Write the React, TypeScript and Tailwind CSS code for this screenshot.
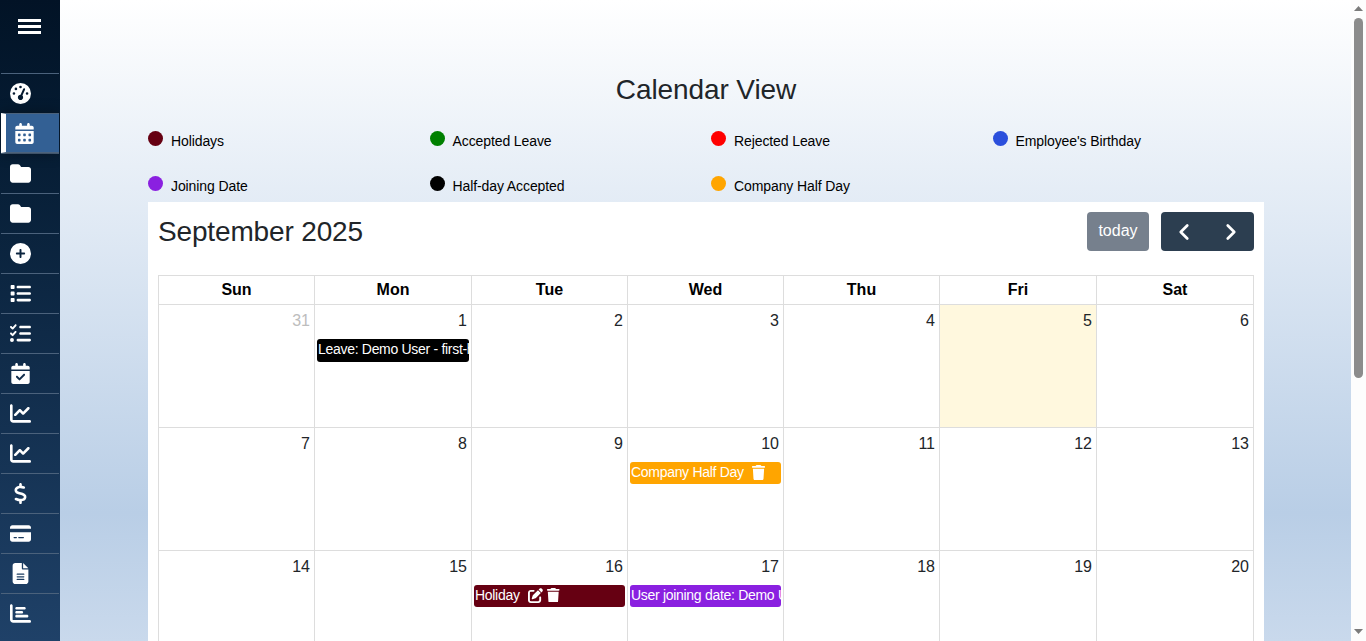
import {
  FaGaugeHigh,
  FaCalendarDays,
  FaFolder,
  FaCirclePlus,
  FaList,
  FaListCheck,
  FaCalendarCheck,
  FaChartLine,
  FaDollarSign,
  FaCreditCard,
  FaFileLines,
  FaChartBar,
  FaPenToSquare,
  FaTrash,
} from 'react-icons/fa6';
import type { IconType } from 'react-icons';
import { ChevronLeft, ChevronRight } from 'lucide-react';

const navItems: { icon: IconType; active?: boolean }[] = [
  { icon: FaGaugeHigh },
  { icon: FaCalendarDays, active: true },
  { icon: FaFolder },
  { icon: FaFolder },
  { icon: FaCirclePlus },
  { icon: FaList },
  { icon: FaListCheck },
  { icon: FaCalendarCheck },
  { icon: FaChartLine },
  { icon: FaChartLine },
  { icon: FaDollarSign },
  { icon: FaCreditCard },
  { icon: FaFileLines },
  { icon: FaChartBar },
];

const legend = [
  { label: 'Holidays', color: 'bg-[#660012]' },
  { label: 'Accepted Leave', color: 'bg-[#008000]' },
  { label: 'Rejected Leave', color: 'bg-[#ff0000]' },
  { label: "Employee's Birthday", color: 'bg-[#2b4fdc]' },
  { label: 'Joining Date', color: 'bg-[#8a20e0]' },
  { label: 'Half-day Accepted', color: 'bg-black' },
  { label: 'Company Half Day', color: 'bg-[#ffa500]' },
];

const weekDays = ['Sun', 'Mon', 'Tue', 'Wed', 'Thu', 'Fri', 'Sat'];

const weeks = [
  [31, 1, 2, 3, 4, 5, 6],
  [7, 8, 9, 10, 11, 12, 13],
  [14, 15, 16, 17, 18, 19, 20],
];

// column widths are not even in the reference, the table rounds them
const gridCols = 'grid grid-cols-[156px_157px_156px_156px_156px_157px_157px]';

function DayEvent({ day }: { day: number }) {
  const base = 'mx-[2px] mt-[7px] flex items-center overflow-hidden whitespace-nowrap rounded-[3px] pb-[2px] pl-[1px] text-[14px] tracking-[-0.3px] text-white';
  if (day === 1) return <div className={`${base} h-[23px] bg-black`}>Leave: Demo User - first-half</div>;
  if (day === 10)
    return (
      <div className={`${base} h-[22px] bg-[#ffa500]`}>
        Company Half Day
        <FaTrash className="ml-[7px] text-[15px]" />
      </div>
    );
  if (day === 16)
    return (
      <div className={`${base} h-[22px] bg-[#660012]`}>
        Holiday
        <FaPenToSquare className="ml-[8px] text-[15px]" />
        <FaTrash className="ml-[3px] text-[14.5px]" />
      </div>
    );
  if (day === 17) return <div className={`${base} h-[22px] bg-[#8a20e0]`}>User joining date: Demo User</div>;
  return null;
}

export default function App() {
  return (
    <div className="flex h-[641px] w-[1366px] overflow-hidden font-['Liberation_Sans',Arial,sans-serif] text-[#212529]">
      <aside className="flex w-[60px] shrink-0 flex-col overflow-hidden bg-gradient-to-b from-[#021326] to-[#1f4168]">
        <div className="flex h-[73px] shrink-0 items-start justify-center pt-[19px] pr-[1px] text-white">
          <div className="flex w-[23px] flex-col gap-[3px]">
            <span className="h-[3px] bg-white" />
            <span className="h-[3px] bg-white" />
            <span className="h-[3px] bg-white" />
          </div>
        </div>
        {navItems.map((item, i) => {
          const Icon = item.icon;
          return (
            <div
              key={i}
              className={`mx-[1px] flex h-[40px] shrink-0 items-center border-t border-[#4b627c] text-white ${
                item.active
                  ? 'relative border-b border-l-[5px] border-l-white bg-[#336094] pl-[8px] shadow-[0_0_14px_rgba(0,0,0,0.35)]'
                  : 'pl-[9px]'
              }`}
            >
              <Icon className="text-[21px]" />
            </div>
          );
        })}
      </aside>

      <main className="flex min-w-0 flex-1 flex-col bg-gradient-to-b from-white via-[#b9cee6] via-80% to-[#c9d9ec] pt-[73px] pr-[87px] pl-[88px]">
        <h1 className="text-center text-[28px] leading-[33px] tracking-[-0.1px]">Calendar View</h1>
        <div className="mt-[25px] grid w-[1126px] grid-cols-4 text-[14px] tracking-[-0.1px] text-black">
          {legend.map((l) => (
            <div key={l.label} className="flex h-[45px] items-start">
              <span className={`mr-2 h-[15px] w-[15px] rounded-full ${l.color}`} />
              <span className="leading-[20px]">{l.label}</span>
            </div>
          ))}
        </div>
        <section className="-mt-[19px] bg-white px-[10px] pt-[10px]">
          <div className="flex h-[63px] items-start justify-between">
            <h2 className="text-[28px] leading-[39px] tracking-[-0.15px]">September 2025</h2>
            <div className="flex">
              <button className="h-[39px] w-[62px] rounded-[4px] bg-[#76808d] pb-[2px] text-[16px] text-white">today</button>
              <div className="ml-3 flex h-[39px] w-[93px] rounded-[4px] bg-[#2c3e50] text-white">
                <span className="flex flex-1 items-center justify-center">
                  <ChevronLeft size={26} strokeWidth={2.5} />
                </span>
                <span className="flex flex-1 items-center justify-center">
                  <ChevronRight size={26} strokeWidth={2.5} />
                </span>
              </div>
            </div>
          </div>
          <div className="border-t border-l border-[#dddddd]">
            <div className={gridCols}>
              {weekDays.map((d) => (
                <div key={d} className="h-[29px] border-r border-b border-[#dddddd] text-center text-[16px] leading-[28px] font-bold text-black">
                  {d}
                </div>
              ))}
            </div>
            {weeks.map((week, i) => (
              <div key={i} className={gridCols}>
                {week.map((day) => (
                  <div key={day} className={`h-[123px] border-r border-b border-[#dddddd] ${day === 5 ? 'bg-[#fff8de]' : ''}`}>
                    <div className={`px-[4px] pt-[5px] text-right text-[16px] leading-[22px] ${day === 31 ? 'text-[#bdbdbd]' : ''}`}>{day}</div>
                    <DayEvent day={day} />
                  </div>
                ))}
              </div>
            ))}
          </div>
        </section>
      </main>

      <div className="relative w-[15px] shrink-0 bg-[#fdfdfd]">
        <svg className="absolute top-[6px] left-[3px]" width="9" height="5" viewBox="0 0 9 5">
          <path d="M4.5 0L9 5H0z" fill="#7b7b7b" />
        </svg>
        <div className="absolute top-[18px] left-[3px] h-[360px] w-[9px] rounded-[5px] bg-[#8c8c8c]" />
        <svg className="absolute top-[629px] left-[3px]" width="9" height="5" viewBox="0 0 9 5">
          <path d="M0 0H9L4.5 5z" fill="#7b7b7b" />
        </svg>
      </div>
    </div>
  );
}
